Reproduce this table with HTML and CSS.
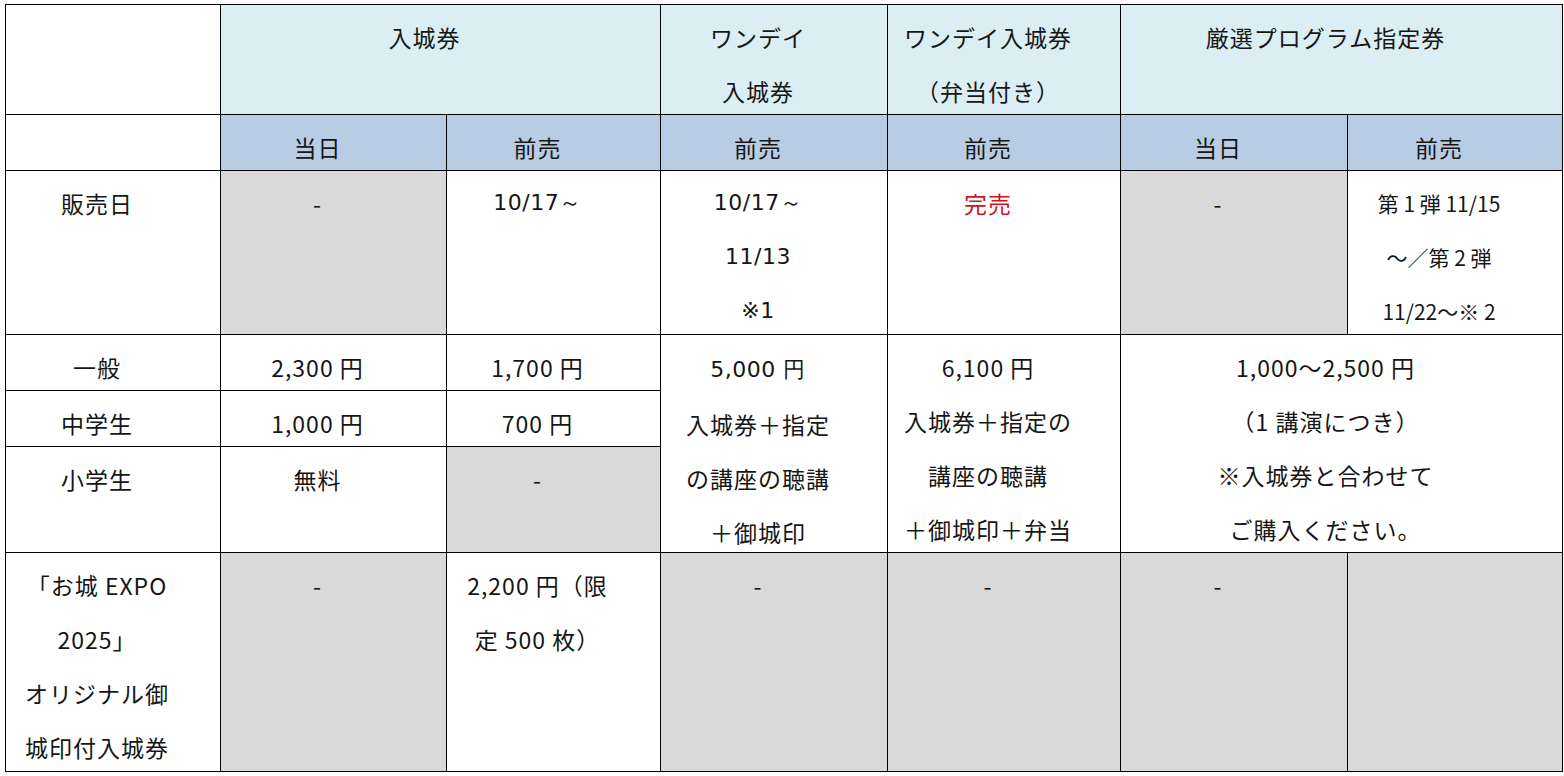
FILE: index.html
```html
<!DOCTYPE html>
<html lang="ja">
<head>
<meta charset="utf-8">
<title>料金表</title>
<link rel="stylesheet" href="styles.css">
</head>
<body>
<div class="grid">
  <div class="c"></div>
  <div class="c h1 s2">入城券</div>
  <div class="c h1">ワンデイ<br>入城券</div>
  <div class="c h1">ワンデイ入城券<br>（弁当付き）</div>
  <div class="c h1 s2">厳選プログラム指定券</div>

  <div class="c"></div>
  <div class="c h2">当日</div>
  <div class="c h2">前売</div>
  <div class="c h2">前売</div>
  <div class="c h2">前売</div>
  <div class="c h2">当日</div>
  <div class="c h2">前売</div>

  <div class="c">販売日</div>
  <div class="c g">-</div>
  <div class="c v">10/17～</div>
  <div class="c v">10/17～<br>11/13<br>※1</div>
  <div class="c red">完売</div>
  <div class="c g">-</div>
  <div class="c sm">第 1 弾 11/15<br>～／第 2 弾<br>11/22～※ 2</div>

  <div class="c">一般</div>
  <div class="c">2,300 円</div>
  <div class="c">1,700 円</div>
  <div class="c r3"><span class="v">5,000 円</span><br>入城券＋指定<br>の講座の聴講<br>＋御城印</div>
  <div class="c r3">6,100 円<br>入城券＋指定の<br>講座の聴講<br>＋御城印＋弁当</div>
  <div class="c r3 s2">1,000～2,500 円<br>（1 講演につき）<br>※入城券と合わせて<br>ご購入ください。</div>

  <div class="c">中学生</div>
  <div class="c">1,000 円</div>
  <div class="c">700 円</div>

  <div class="c">小学生</div>
  <div class="c">無料</div>
  <div class="c g">-</div>

  <div class="c">「お城 EXPO<br>2025」<br>オリジナル御<br>城印付入城券</div>
  <div class="c g">-</div>
  <div class="c">2,200 円（限<br>定 500 枚）</div>
  <div class="c g">-</div>
  <div class="c g">-</div>
  <div class="c g">-</div>
  <div class="c g"></div>
</div>
</body>
</html>
```

FILE: styles.css
```css
html, body {
  margin: 0;
  padding: 0;
  background: #ffffff;
}

body {
  font-family: "Noto Sans CJK JP", "Noto Sans", sans-serif;
  font-size: 23px;
  color: #161616;
}

.grid {
  display: grid;
  grid-template-columns: 214px 225px 213px 226px 232px 226px 214px;
  grid-template-rows: 109px 55px 163px 55px 55px 105px 218px;
  gap: 1px;
  padding: 1px;
  background: #000000;
  width: max-content;
  margin: 4px 0 0 5px;
}

.c {
  background: #ffffff;
  text-align: center;
  line-height: 54px;
  letter-spacing: 1px;
  padding: 5px 32px 0 0;
  white-space: nowrap;
  overflow: visible;
}

.h1 { background: #daeef3; }
.h2 { background: #b8cce4; }
.g { background: #d9d9d9; }
.red { color: #d0141e; }
.v { font-family: "DejaVu Sans", sans-serif; font-size: 22px; letter-spacing: 0.5px; }
.sm { font-size: 21px; letter-spacing: 0; }

.s2 { grid-column: span 2; }
.r3 { grid-row: span 3; }
```
